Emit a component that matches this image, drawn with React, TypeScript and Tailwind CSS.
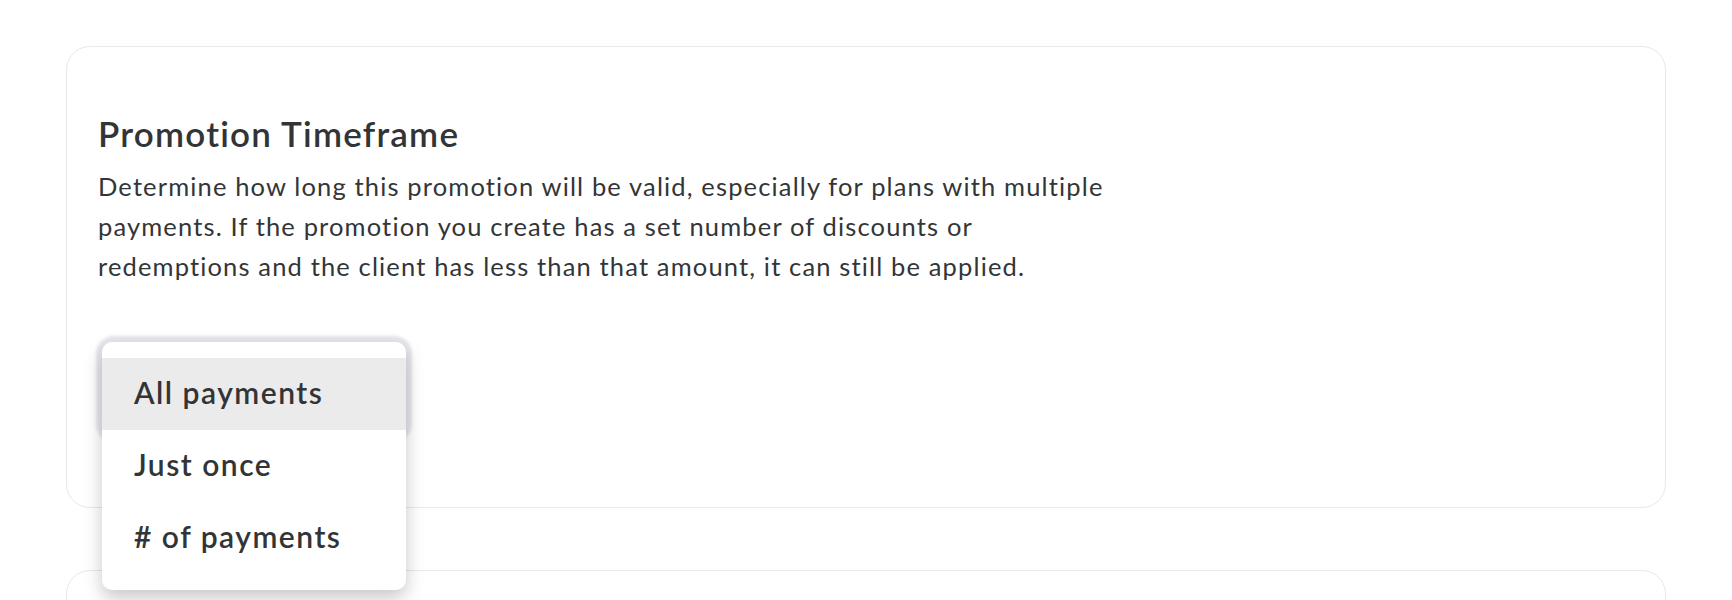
const options = ["All payments", "Just once", "# of payments"];

export default function App() {
  return (
    <div
      className="min-h-screen bg-white px-[66px] pt-[46px] text-[#323436] [font-variant-ligatures:none]"
      style={{ fontFamily: "Lato, 'Noto Sans', sans-serif" }}
    >
      {/* Promotion timeframe card */}
      <div className="h-[462px] rounded-[24px] border border-[#e8e8ee] bg-white px-[31px] pt-[64px]">
        <h2 className="text-[35px] leading-[44px] font-semibold tracking-[0.035em]">Promotion Timeframe</h2>
        <p className="mt-[11px] whitespace-nowrap text-[25.5px] leading-[40px] tracking-[0.045em] text-[#333537]">
          Determine how long this promotion will be valid, especially for plans with multiple
          <br />
          payments. If the promotion you create has a set number of discounts or
          <br />
          redemptions and the client has less than that amount, it can still be applied.
        </p>

        <div className="relative ml-[4px] mt-[56px] w-[304px]">
          {/* select trigger, open */}
          <div className="h-[94px] rounded-[12px] bg-white shadow-[0_0_3px_6px_#e6e6ec]" />
          {/* menu */}
          <div className="absolute left-0 top-0 z-10 w-full rounded-[10px] bg-white pt-4 pb-[16px] shadow-[0_8px_18px_rgba(0,0,0,0.22)]">
            {options.map((o, i) => (
              <div
                key={o}
                className={
                  "flex h-[72px] items-center px-8 pb-[3px] text-[30px] font-semibold tracking-[0.05em] " +
                  (i === 0 ? "bg-[#ebebeb]" : "")
                }
              >
                {o}
              </div>
            ))}
          </div>
        </div>
      </div>

      {/* next card */}
      <div className="mt-[62px] h-[300px] rounded-[24px] border border-[#e8e8ee] bg-white" />
    </div>
  );
}
